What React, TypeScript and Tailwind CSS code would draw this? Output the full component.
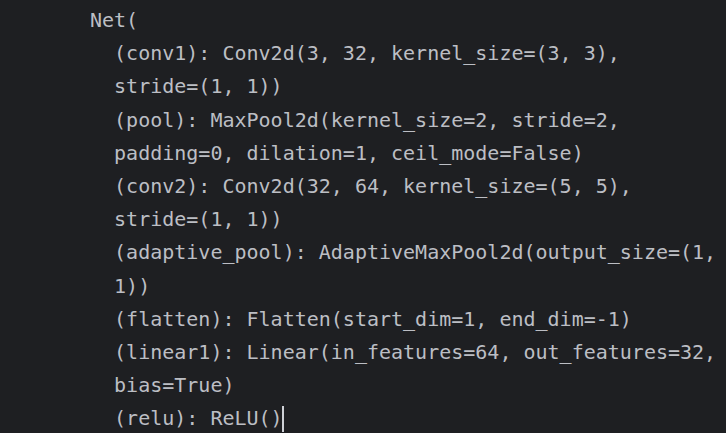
import React from "react";

const lines: string[] = [
  "Net(",
  "  (conv1): Conv2d(3, 32, kernel_size=(3, 3),",
  "  stride=(1, 1))",
  "  (pool): MaxPool2d(kernel_size=2, stride=2,",
  "  padding=0, dilation=1, ceil_mode=False)",
  "  (conv2): Conv2d(32, 64, kernel_size=(5, 5),",
  "  stride=(1, 1))",
  "  (adaptive_pool): AdaptiveMaxPool2d(output_size=(1,",
  "  1))",
  "  (flatten): Flatten(start_dim=1, end_dim=-1)",
  "  (linear1): Linear(in_features=64, out_features=32,",
  "  bias=True)",
];

export default function App() {
  return (
    <div className="w-[726px] h-[433px] bg-[#1e1f22] overflow-hidden">
      <div
        className="pl-[90px] pt-[4px] text-[20px] leading-[33.2px] text-[#bcbec4] whitespace-pre"
        style={{ fontFamily: '"DejaVu Sans Mono", "Liberation Mono", monospace' }}
      >
        {lines.map((l, i) => (
          <div key={i}>{l}</div>
        ))}
        <div className="flex items-center">
          <span>{"  (relu): ReLU()"}</span>
          <span className="ml-[-1px] inline-block w-[2px] h-[26px] bg-[#ced0d6]" />
        </div>
      </div>
    </div>
  );
}
